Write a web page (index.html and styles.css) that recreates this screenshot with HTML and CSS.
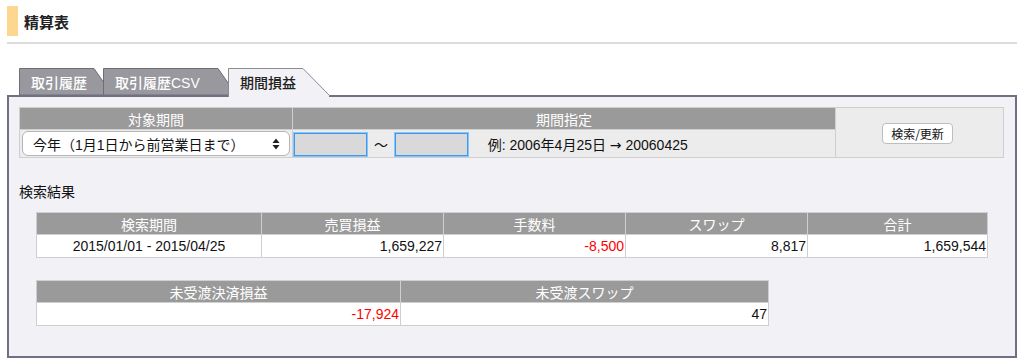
FILE: index.html
```html
<!DOCTYPE html>
<html lang="ja">
<head>
    <meta charset="UTF-8">
    <meta name="viewport" content="width=device-width, initial-scale=1.0">
    <title>精算表</title>
    <link rel="stylesheet" href="styles.css">
</head>
<body>
    <div class="page-title">
        <span class="title-bar"></span>
        <h1>精算表</h1>
    </div>
    <div class="title-rule"></div>

    <div class="tabs">
        <div class="tab tab-first">
            <svg class="tab-shape" width="94" height="27" viewBox="0 0 94 27"><polygon points="0.5,27 0.5,0.5 75,0.5 93.5,27" fill="#98989e" stroke="#6e6e74"/></svg>
            <span class="tab-label">取引履歴</span>
        </div>
        <div class="tab tab-second">
            <svg class="tab-shape" width="134" height="27" viewBox="0 0 134 27"><polygon points="0.5,27 0.5,0.5 115,0.5 133.5,27" fill="#98989e" stroke="#6e6e74"/></svg>
            <span class="tab-label">取引履歴CSV</span>
        </div>
        <div class="tab tab-active">
            <svg class="tab-shape" width="102" height="29" viewBox="0 0 102 29"><polygon points="0.5,29 0.5,0.5 75,0.5 101.5,27.5" fill="#f2f2f6" stroke="#8a8a90"/><rect x="1" y="27" width="100" height="2" fill="#f2f2f6"/></svg>
            <span class="tab-label">期間損益</span>
        </div>
    </div>

    <div class="panel">
        <table class="search-table">
            <tr>
                <th class="col-target">対象期間</th>
                <th class="col-range">期間指定</th>
                <td class="col-action" rowspan="2"><button class="search-btn">検索/更新</button></td>
            </tr>
            <tr>
                <td class="cell-select">
                    <div class="select">
                        <span>今年（1月1日から前営業日まで）</span>
                        <svg class="select-arrows" width="8" height="12" viewBox="0 0 8 12"><polygon points="4,0.5 7.5,5 0.5,5" fill="#222"/><polygon points="0.5,7 7.5,7 4,11.5" fill="#222"/></svg>
                    </div>
                </td>
                <td class="cell-range">
                    <input class="date-input" type="text">
                    <span class="tilde">〜</span>
                    <input class="date-input" type="text">
                    <span class="range-example">例: 2006年4月25日 <span class="arrow">→</span> 20060425</span>
                </td>
            </tr>
        </table>

        <div class="result-title">検索結果</div>

        <table class="result-table">
            <tr>
                <th class="w-period">検索期間</th>
                <th class="w-col">売買損益</th>
                <th class="w-col">手数料</th>
                <th class="w-col">スワップ</th>
                <th>合計</th>
            </tr>
            <tr>
                <td class="center">2015/01/01 - 2015/04/25</td>
                <td class="num">1,659,227</td>
                <td class="num minus">-8,500</td>
                <td class="num">8,817</td>
                <td class="num">1,659,544</td>
            </tr>
        </table>

        <table class="result-table pending-table">
            <tr>
                <th class="w-pending">未受渡決済損益</th>
                <th>未受渡スワップ</th>
            </tr>
            <tr>
                <td class="num minus">-17,924</td>
                <td class="num">47</td>
            </tr>
        </table>
    </div>
</body>
</html>
```

FILE: styles.css
```css
body {
    font-family: "Liberation Sans", "Noto Sans CJK JP", sans-serif;
    font-size: 14px;
    color: #111;
    margin: 0;
    padding: 6px 6px 0 7px;
    background-color: #fff;
}
.page-title {
    display: flex;
    align-items: center;
    height: 30px;
}
.title-bar {
    width: 11px;
    height: 30px;
    background-color: #fdd690;
}
.page-title h1 {
    margin: 0 0 0 6px;
    font-size: 15px;
    font-weight: bold;
    color: #222;
}
.title-rule {
    margin-top: 6px;
    border-top: 2px solid #dcdcdc;
}
.tabs {
    display: flex;
    align-items: flex-end;
    margin: 24px 0 -2px 12px;
    position: relative;
    z-index: 1;
}
.tab {
    position: relative;
    height: 27px;
    margin-bottom: 2px;
    display: flex;
    align-items: center;
    padding-left: 12px;
    box-sizing: border-box;
}
.tab-shape {
    position: absolute;
    left: 0;
    top: 0;
}
.tab-label {
    position: relative;
    font-weight: 500;
    color: #fff;
    padding-top: 1px;
}
.tab-first {
    width: 94px;
}
.tab-second {
    width: 134px;
    margin-left: -10px;
}
.tab-active {
    width: 102px;
    height: 29px;
    margin-left: -9px;
    margin-bottom: 0;
    padding-bottom: 2px;
}
.tab-active .tab-label {
    color: #222;
}
.panel {
    border: 2px solid #6f6f85;
    background-color: #f2f2f6;
    padding: 10px 11px 10px 10px;
    height: 263px;
    box-sizing: border-box;
}
table {
    border-collapse: collapse;
    table-layout: fixed;
}
th {
    background-color: #9a9a9a;
    color: #fff;
    font-weight: normal;
    text-align: center;
    height: 21px;
    padding: 0;
    border: 1px solid #cfcfcf;
}
td {
    border: 1px solid #cfcfcf;
    padding: 0;
}
.search-table {
    width: 985px;
}
.search-table td {
    background-color: #ececec;
}
.col-target {
    width: 272px;
}
.col-range {
    width: 542px;
}
.col-action {
    text-align: center;
    padding-top: 1px;
}
.search-btn {
    font-family: "Noto Sans CJK JP", sans-serif;
    font-size: 12px;
    height: 21px;
    padding: 0 8px;
    background-color: #fff;
    border: 1px solid #bdbdbd;
    border-radius: 4px;
    color: #111;
    margin-left: -4px;
}
.cell-select {
    height: 25px;
    padding: 1px 2px;
}
.select {
    display: flex;
    align-items: center;
    justify-content: space-between;
    height: 25px;
    box-sizing: border-box;
    padding: 0 9px 0 10px;
    background-color: #fff;
    border: 1px solid #b5b5b5;
    border-radius: 6px;
}
.cell-range {
    padding: 1px 0 0 1px;
}
.cell-range > * {
    vertical-align: middle;
}
.date-input {
    width: 73px;
    height: 23px;
    box-sizing: border-box;
    background-color: #d9d9d9;
    border: 1px solid #3b99f0;
    box-shadow: 0 0 0 1px #8cc4f6;
    margin: 0;
}
.tilde {
    display: inline-block;
    margin: 0 3px;
}
.range-example {
    margin-left: 16px;
}
.arrow {
    font-family: "DejaVu Sans", sans-serif;
}
.result-title {
    margin-top: 24px;
    line-height: 20px;
}
.result-table {
    margin: 10px 0 0 17px;
    width: 952px;
}
.result-table td {
    background-color: #fff;
    height: 22px;
}
.w-period {
    width: 224px;
}
.w-col {
    width: 181px;
}
.center {
    text-align: center;
}
.num {
    text-align: right;
    padding-right: 1px;
}
.minus {
    color: #ff0000;
}
.pending-table {
    margin-top: 22px;
    width: 733px;
}
.w-pending {
    width: 363px;
}
```
